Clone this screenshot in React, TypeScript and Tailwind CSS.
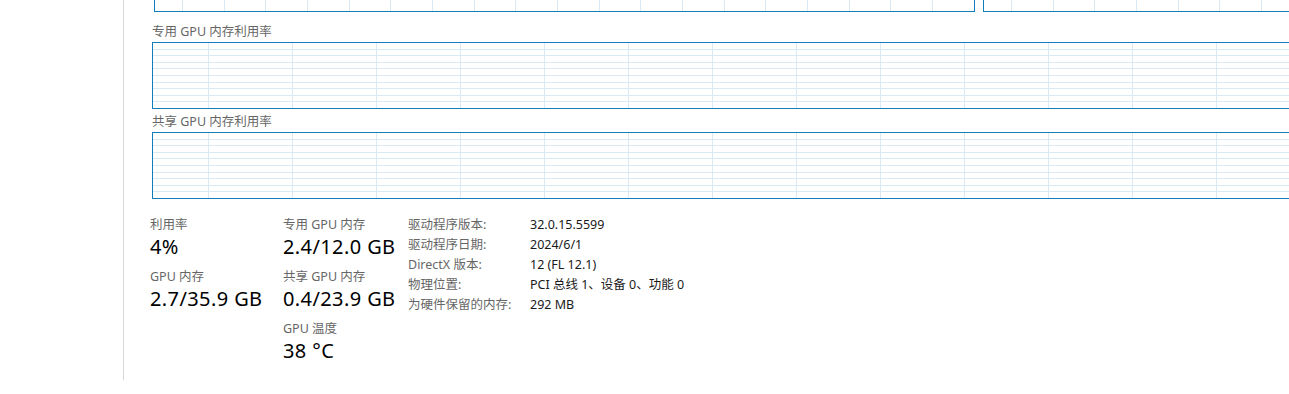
import React from 'react';

const font = "font-['Noto_Sans','Noto_Sans_CJK_SC',sans-serif]";

const SmallChart = ({ width }: { width: number }) => {
  const xs: number[] = [];
  for (let x = 27; x < width - 2; x += 41.67) xs.push(Math.round(x) + 0.5);
  return (
    <div className="relative h-[12px] shrink-0 border-x border-b border-[#117dbb]" style={{ width }}>
      <svg className="absolute inset-0" width={width - 2} height={11} shapeRendering="crispEdges">
        {xs.map(x => (
          <line key={x} x1={x} x2={x} y1={0} y2={11} stroke="#d9eaf4" strokeWidth={1} />
        ))}
      </svg>
    </div>
  );
};

const BigChart = () => {
  const w = 1198;
  const h = 65;
  const xs: number[] = [];
  for (let x = 55; x < w; x += 84) xs.push(x + 0.5);
  const ys: number[] = [];
  for (let k = 1; k < 10; k++) ys.push(Math.round(6.6 * k - 1) + 0.5);
  return (
    <div className="relative h-[67px] w-[1200px] shrink-0 border border-[#117dbb]">
      <svg className="absolute inset-0" width={w} height={h} shapeRendering="crispEdges">
        {ys.map(y => (
          <line key={'y' + y} x1={0} x2={w} y1={y} y2={y} stroke="#d9eaf4" strokeWidth={1} />
        ))}
        {xs.map(x => (
          <line key={'x' + x} x1={x} x2={x} y1={0} y2={h} stroke="#d9eaf4" strokeWidth={1} />
        ))}
      </svg>
    </div>
  );
};

const Stat = ({ label, value }: { label: string; value: string }) => (
  <div className="mb-[10px]">
    <div className="text-[12.5px] leading-[16px] text-[#666]">{label}</div>
    <div className="mt-[2px] text-[20px] leading-[24px] tracking-[0.4px] text-black">{value}</div>
  </div>
);

const details = [
  ['驱动程序版本:', '32.0.15.5599'],
  ['驱动程序日期:', '2024/6/1'],
  ['DirectX 版本:', '12 (FL 12.1)'],
  ['物理位置:', 'PCI 总线 1、设备 0、功能 0'],
  ['为硬件保留的内存:', '292 MB'],
];

const App = () => {
  return (
    <div className={`flex h-[394px] w-[1289px] overflow-hidden bg-white ${font}`}>
      <div className="w-[123px] shrink-0" />
      <div className="h-[380px] w-px shrink-0 bg-[#d6d6d6]" />
      <div className="flex min-w-0 flex-1 flex-col">
        <div className="flex pl-[30px]">
          <SmallChart width={821} />
          <div className="ml-[8px]">
            <SmallChart width={400} />
          </div>
        </div>

        <div className="pl-[28px]">
          <div className="pt-[12px] pb-[2px] text-[12.5px] leading-[16px] text-[#666]">专用 GPU 内存利用率</div>
          <BigChart />
          <div className="pt-[5px] pb-[2px] text-[12.5px] leading-[16px] text-[#666]">共享 GPU 内存利用率</div>
          <BigChart />
        </div>

        <div className="flex pt-[16px] pl-[26px]">
          <div className="w-[133px] pt-[2px]">
            <Stat label="利用率" value="4%" />
            <Stat label="GPU 内存" value="2.7/35.9 GB" />
          </div>
          <div className="w-[125px] pt-[2px]">
            <Stat label="专用 GPU 内存" value="2.4/12.0 GB" />
            <Stat label="共享 GPU 内存" value="0.4/23.9 GB" />
            <Stat label="GPU 温度" value="38 °C" />
          </div>
          <div className="flex flex-col">
            {details.map(([k, v]) => (
              <div key={k} className="flex text-[12.5px] leading-[20px]">
                <span className="w-[122px] text-[#666]">{k}</span>
                <span className="text-[#1a1a1a]">{v}</span>
              </div>
            ))}
          </div>
        </div>
      </div>
    </div>
  );
};

export default App;
